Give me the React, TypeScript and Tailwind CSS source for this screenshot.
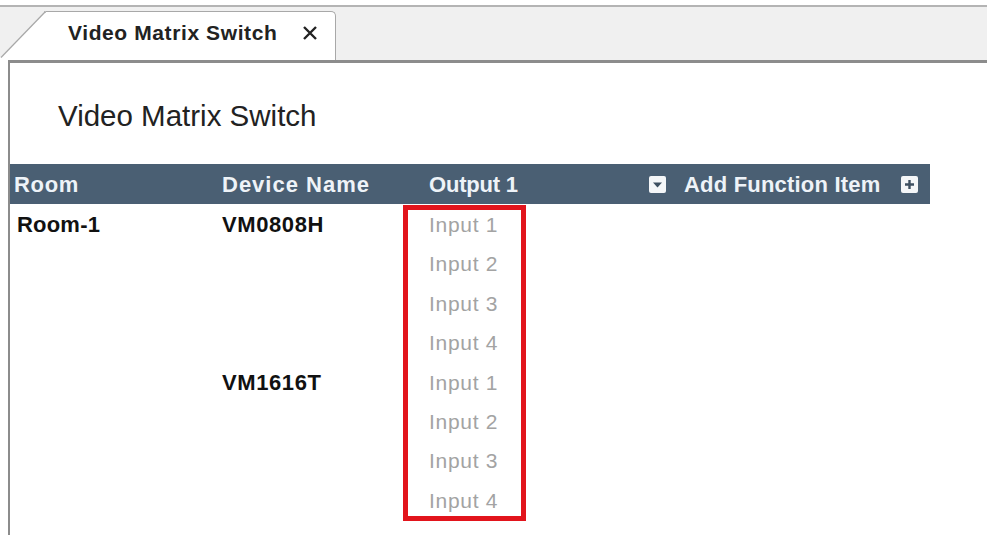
import React from 'react';

const rows = [
    { room: 'Room-1', device: 'VM0808H', input: 'Input 1' },
    { room: '', device: '', input: 'Input 2' },
    { room: '', device: '', input: 'Input 3' },
    { room: '', device: '', input: 'Input 4' },
    { room: '', device: 'VM1616T', input: 'Input 1' },
    { room: '', device: '', input: 'Input 2' },
    { room: '', device: '', input: 'Input 3' },
    { room: '', device: '', input: 'Input 4' },
];

function DropIcon() {
    return (
        <svg width="17" height="17" viewBox="0 0 17 17">
            <rect x="0" y="0" width="17" height="17" rx="2" fill="#f4f6f8" />
            <path d="M4 6.5 L13 6.5 L8.5 11.5 Z" fill="#3d4f60" />
        </svg>
    );
}

function PlusIcon() {
    return (
        <svg width="17" height="17" viewBox="0 0 17 17">
            <rect x="0" y="0" width="17" height="17" rx="2" fill="#f4f6f8" />
            <path d="M8.5 4 V13 M4 8.5 H13" stroke="#3d4f60" strokeWidth="2.4" />
        </svg>
    );
}

export default function App() {
    return (
        <div className="w-[987px] h-[535px] bg-white overflow-hidden font-['Liberation_Sans',Arial,sans-serif] text-[#1a1a1a]">
            {/* tab strip */}
            <div className="mt-[5px] h-[55px] border-t-2 border-[#b4b4b4] bg-[#f0f0f0] flex items-end">
                <div className="flex items-end h-[49px]">
                    <svg width="46" height="49" viewBox="0 0 46 49" className="block">
                        <polygon points="0,47 46,1 46,49 0,49" fill="#ffffff" />
                        <line x1="1" y1="46.5" x2="45" y2="1" stroke="#a8a8a8" strokeWidth="1.2" />
                        <line x1="44" y1="1" x2="46" y2="1" stroke="#a8a8a8" strokeWidth="1.5" />
                    </svg>
                    <div className="h-[49px] w-[290px] bg-white border-t-[1.5px] border-r-[1.5px] border-[#a8a8a8] rounded-tr-[5px] flex items-center pl-[22px] pb-[6px]">
                        <span className="text-[21px] font-bold text-[#222] tracking-[0.6px]">Video Matrix Switch</span>
                        <svg width="16" height="16" viewBox="0 0 16 16" className="ml-[25px]">
                            <path d="M2 2 L14 14 M14 2 L2 14" stroke="#222" strokeWidth="2.4" />
                        </svg>
                    </div>
                </div>
            </div>
            {/* content */}
            <div className="ml-[8px] h-[480px] border-t-[3px] border-l-2 border-[#8c8c8c]">
                <div className="mt-[1px] bg-white">
                    <div className="h-[100px] pl-[48px] pt-[37px]">
                        <h1 className="text-[29.5px] leading-none text-[#222]">Video Matrix Switch</h1>
                    </div>
                    <div className="w-[920px] h-[40px] bg-[#4a5f73] flex items-center text-[22px] font-bold text-[#eef3f8]">
                        <div className="w-[212px] pl-[4px] tracking-[0.7px]">Room</div>
                        <div className="w-[207px] tracking-[1px]">Device Name</div>
                        <div className="w-[220px] tracking-[-0.2px]">Output 1</div>
                        <DropIcon />
                        <div className="ml-[18px] w-[217px] tracking-[0.2px]">Add Function Item</div>
                        <PlusIcon />
                    </div>
                    <div className="flex mt-[1px]">
                        <div className="w-[212px] pl-[7px] text-[22px] font-bold text-[#111] tracking-[0.2px]">
                            {rows.map((r, i) => (
                                <div key={i} className="h-[39.4px] flex items-center">{r.room}</div>
                            ))}
                        </div>
                        <div className="w-[181px] text-[22px] font-bold text-[#111] tracking-[0.6px]">
                            {rows.map((r, i) => (
                                <div key={i} className="h-[39.4px] flex items-center">{r.device}</div>
                            ))}
                        </div>
                        <div className="h-[316px] w-[123px] border-[5px] border-[#e2141c] pl-[21px] text-[21px] text-[#a3a3a3] tracking-[0.7px]">
                            {rows.map((r, i) => (
                                <div key={i} className={`h-[39.4px] flex items-center ${i === 0 ? '-mt-[5px]' : ''}`}>{r.input}</div>
                            ))}
                        </div>
                    </div>
                </div>
            </div>
        </div>
    );
}
